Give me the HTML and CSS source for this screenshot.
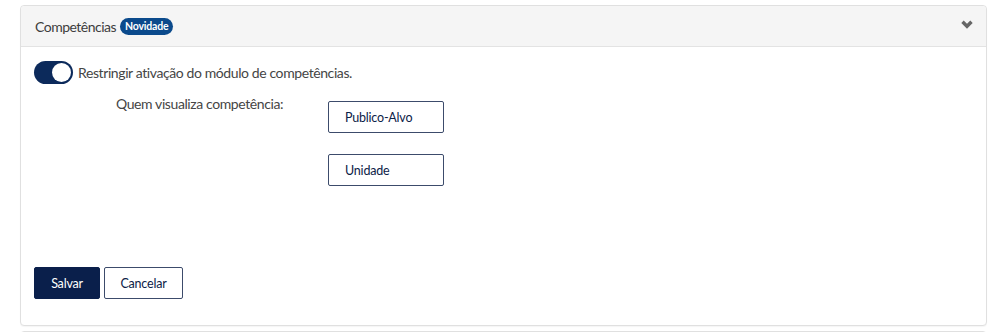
FILE: index.html
```html
<!DOCTYPE html>
<html lang="pt-BR">
<head>
    <meta charset="UTF-8">
    <meta name="viewport" content="width=device-width, initial-scale=1.0">
    <title>Competências</title>
    <link rel="stylesheet" href="styles.css">
</head>
<body>
    <div class="panel">
        <div class="panel-heading">
            <span class="panel-title">Competências</span>
            <span class="badge">Novidade</span>
            <svg class="chevron" width="12" height="9" viewBox="0 0 12 9">
                <path d="M1.5 1.8 L6 6.3 L10.5 1.8" fill="none" stroke="#666" stroke-width="3.4"/>
            </svg>
        </div>

        <div class="panel-body">
            <label class="switch-row">
                <span class="switch on"><span class="knob"></span></span>
                <span class="switch-label">Restringir ativação do módulo de competências.</span>
            </label>

            <div class="visibility">
                <div class="visibility-label">Quem visualiza competência:</div>
                <div class="visibility-options">
                    <button type="button" class="option-btn">Publico-Alvo</button>
                    <button type="button" class="option-btn">Unidade</button>
                </div>
            </div>

            <div class="actions">
                <button type="button" class="btn btn-primary">Salvar</button>
                <button type="button" class="btn btn-default">Cancelar</button>
            </div>
        </div>
    </div>

    <div class="panel panel-next">
        <div class="panel-heading"></div>
    </div>
</body>
</html>
```

FILE: styles.css
```css
* { margin: 0; padding: 0; box-sizing: border-box; }
html, body {
    height: 100%;
    overflow: hidden;
}
body {
    font-family: Lato, "Open Sans", sans-serif;
    font-size: 14px;
    letter-spacing: -0.4px;
    color: #454545;
    background: #fff;
    padding: 5px 9px 0 20px;
}

.panel {
    border: 1px solid #e0e0e0;
    border-radius: 4px;
    background: #fff;
    box-shadow: 0 1px 1px rgba(0,0,0,0.04);
}

.panel-heading {
    display: flex;
    align-items: center;
    height: 41px;
    padding: 0 14px;
    background: #f5f5f5;
    border-bottom: 1px solid #e3e3e3;
    border-radius: 4px 4px 0 0;
}

.panel-title {
    color: #3d3d3d;
    letter-spacing: -0.5px;
}

.badge {
    margin-left: 4px;
    padding: 0 5px;
    height: 17px;
    line-height: 17px;
    border-radius: 9px;
    background: #0b4a8c;
    color: #fff;
    font-size: 10.5px;
    font-weight: bold;
    letter-spacing: -0.2px;
}

.chevron {
    margin-left: auto;
    margin-right: -1px;
    margin-top: -4px;
}

.panel-body {
    padding: 14px 14px 26px 13px;
}

.switch-row {
    display: flex;
    align-items: center;
    gap: 5px;
}

.switch {
    position: relative;
    width: 39px;
    height: 23px;
    border-radius: 12px;
    background: #ccc;
}

.switch.on {
    background: #0c2a5b;
}

.knob {
    position: absolute;
    top: 2px;
    right: 2px;
    width: 19px;
    height: 19px;
    border-radius: 50%;
    background: #fff;
}

.visibility {
    display: flex;
    margin-top: 11px;
    padding-left: 82px;
}

.visibility-label {
    width: 212px;
    line-height: 18px;
}

.visibility-options {
    display: flex;
    flex-direction: column;
    gap: 21px;
    padding-top: 6px;
}

.option-btn {
    width: 116px;
    height: 32px;
    padding: 0 16px;
    text-align: left;
    font-family: inherit;
    font-size: 12.5px;
    letter-spacing: -0.2px;
    color: #0c2147;
    background: #fff;
    border: 1px solid #3c4b6b;
    border-radius: 2px;
}

.actions {
    display: flex;
    gap: 4px;
    margin-top: 81px;
}

.btn {
    height: 32px;
    padding: 0;
    font-family: inherit;
    font-size: 12.5px;
    letter-spacing: -0.2px;
    border-radius: 2px;
    cursor: pointer;
}

.btn-primary {
    width: 66px;
    background: #0a1f4b;
    color: #fff;
    border: 1px solid #0a1f4b;
}

.btn-default {
    width: 79px;
    background: #fff;
    color: #0c2147;
    border: 1px solid #3c4b6b;
}

.panel-next {
    margin-top: 5px;
}

.panel-next .panel-heading {
    border-bottom: none;
}
```
